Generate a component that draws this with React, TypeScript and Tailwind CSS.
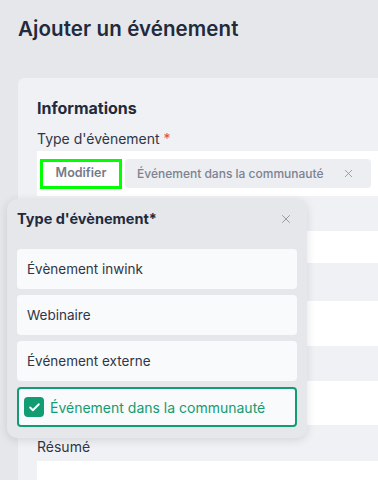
import { Check, X } from 'lucide-react';

const options = ['Évènement inwink', 'Webinaire', 'Événement externe'];

export default function App() {
  return (
    <div className="relative h-[480px] w-[378px] overflow-hidden bg-[#e6e7eb] font-['Inter','Noto_Sans',sans-serif] text-[#222a3b]">
      <h1 className="px-[18px] pt-[16px] text-[20.5px] font-semibold leading-[26px] tracking-[0.1px]">
        Ajouter un événement
      </h1>

      {/* form card, runs off the right edge */}
      <div className="ml-[18px] mt-[36px] w-[400px] rounded-tl-[6px] bg-[#f0f1f5] pl-[19px] pt-[20px]">
        <h2 className="text-[16px] font-bold leading-[20px]">Informations</h2>
        <div className="mt-[11px] text-[14px] leading-[20px] text-[#2f3646]">
          Type d'évènement <span className="text-[#e5484d]">*</span>
        </div>

        <div className="mt-[2px] flex h-[45px] items-center gap-[3px] bg-white pl-[3px]">
          <button className="h-[30px] w-[82px] border-[3px] border-[#00ff00] bg-white text-[12.5px] font-semibold text-[#737a88]">
            Modifier
          </button>
          <div className="flex h-[29px] w-[246px] items-center justify-between rounded-[4px] bg-[#eceef2] pl-[12px] pr-[16px] text-[12px] font-medium text-[#7c8291]">
            <span>Événement dans la communauté</span>
            <X size={13} strokeWidth={1.5} className="text-[#8a909c]" />
          </div>
        </div>

        <div className="h-[35px]" />
        <div className="h-[32px] bg-white" />
        <div className="h-[38px]" />
        <div className="h-[45px] bg-white" />
        <div className="h-[35px]" />
        <div className="h-[44px] bg-white" />
        <div className="flex h-[36px] items-end pb-[5px] text-[14px] leading-[18px] text-[#2f3646]">Résumé</div>
        <div className="h-[40px] bg-white" />
      </div>

      {/* type picker popover */}
      <div className="absolute left-[7px] top-[199px] w-[300px] rounded-[10px] bg-[#e6e7eb] px-[10px] pb-[11px] pt-[10px] shadow-[0_2px_10px_rgba(0,0,0,0.12)]">
        <div className="flex h-[20px] items-center justify-between pr-[4px]">
          <span className="text-[14.5px] font-bold">Type d'évènement*</span>
          <X size={14} strokeWidth={1.5} className="text-[#8a909c]" />
        </div>
        <div className="mt-[20px] flex flex-col gap-[6px]">
          {options.map((o) => (
            <div
              key={o}
              className="flex h-[40px] items-center rounded-[4px] bg-[#f9fafb] pl-[10px] text-[13.5px] text-[#2f3646]"
            >
              {o}
            </div>
          ))}
          <div className="flex h-[40px] items-center gap-[6px] rounded-[4px] border-2 border-[#129c72] bg-[#f9fafb] pl-[5px] text-[14px] text-[#129c72]">
            <span className="flex h-[20px] w-[20px] items-center justify-center rounded-[4px] bg-[#129c72]">
              <Check size={13} strokeWidth={3.5} className="text-white" />
            </span>
            Événement dans la communauté
          </div>
        </div>
      </div>
    </div>
  );
}
